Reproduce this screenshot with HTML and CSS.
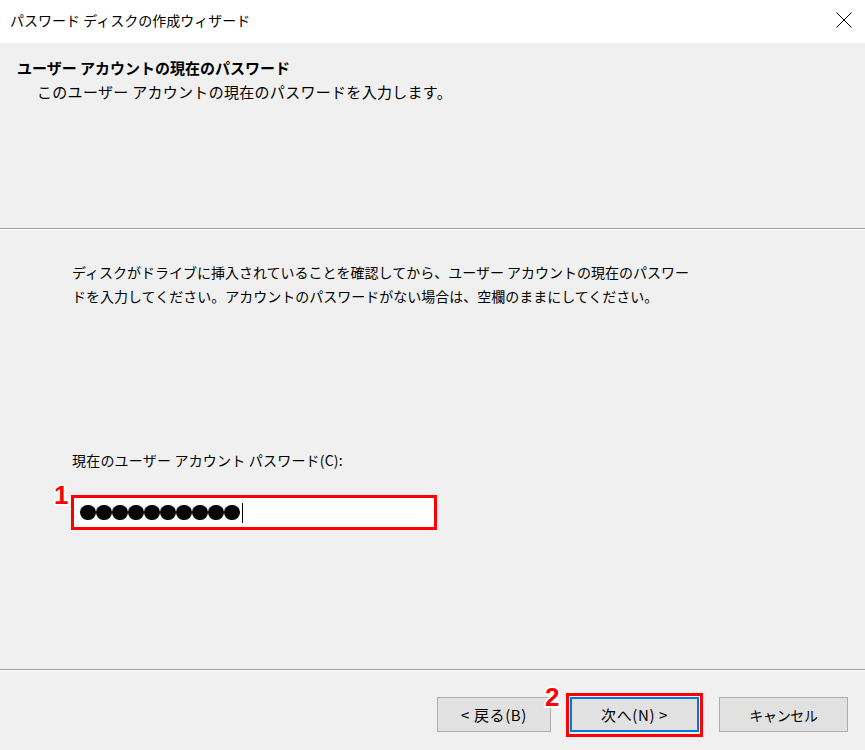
FILE: index.html
```html
<!DOCTYPE html>
<html lang="ja">
<head>
<meta charset="utf-8">
<title>パスワード ディスクの作成ウィザード</title>
<link rel="stylesheet" href="styles.css">
</head>
<body>
<div class="window">
  <div class="titlebar">
    <span class="title">パスワード ディスクの作成ウィザード</span>
    <span class="close">
      <svg width="16" height="16" viewBox="0 0 16 16"><path d="M0.5 0.5 L15.5 15.5 M15.5 0.5 L0.5 15.5" stroke="#000" stroke-width="1" fill="none"/></svg>
    </span>
  </div>
  <div class="header">
    <div class="heading">ユーザー アカウントの現在のパスワード</div>
    <div class="subheading">このユーザー アカウントの現在のパスワードを入力します。</div>
  </div>
  <div class="sep"></div>
  <div class="content">
    <p class="desc">ディスクがドライブに挿入されていることを確認してから、ユーザー アカウントの現在のパスワー<br>ドを入力してください。アカウントのパスワードがない場合は、空欄のままにしてください。</p>
    <div class="label">現在のユーザー アカウント パスワード(C):</div>
    <div class="field-wrap">
      <span class="marker marker-1">1</span>
      <div class="field">
        <span class="dot"></span><span class="dot"></span><span class="dot"></span><span class="dot"></span><span class="dot"></span><span class="dot"></span><span class="dot"></span><span class="dot"></span><span class="dot"></span><span class="dot"></span><span class="caret"></span>
      </div>
    </div>
  </div>
  <div class="sep"></div>
  <div class="footer">
    <button class="btn btn-back">&lt; 戻る(B)</button>
    <div class="highlight">
      <span class="marker marker-2">2</span>
      <button class="btn btn-next">次へ(N) &gt;</button>
    </div>
    <button class="btn btn-cancel">キャンセル</button>
  </div>
</div>
</body>
</html>
```
FILE: styles.css
```css
html, body {
  margin: 0;
  padding: 0;
  background: #f0f0f0;
}
.window {
  width: 865px;
  height: 750px;
  overflow: hidden;
  font-family: "Noto Sans CJK JP", "Noto Sans", sans-serif;
  font-size: 14px;
  color: #000;
  background: #f0f0f0;
}
.titlebar {
  height: 43px;
  background: #fff;
  display: flex;
  align-items: flex-start;
  justify-content: space-between;
}
.title {
  padding-left: 10px;
  line-height: 40px;
  font-size: 14px;
  letter-spacing: 0;
}
.close {
  margin-top: 12px;
  margin-right: 13px;
  width: 16px;
  height: 16px;
}
.close svg { display: block; }
.header {
  height: 185px;
  box-sizing: border-box;
  padding-top: 13px;
  padding-left: 17px;
}
.heading {
  font-weight: bold;
  font-size: 15px;
  line-height: 24px;
  letter-spacing: 0;
}
.subheading {
  font-size: 15px;
  line-height: 24px;
  padding-left: 20px;
  letter-spacing: 0.3px;
}
.sep {
  height: 1px;
  background: #a0a0a0;
  border-bottom: 1px solid #fff;
}
.content {
  height: 439px;
  box-sizing: border-box;
  padding-top: 30px;
  padding-left: 71px;
}
.desc {
  margin: 0 0 0 1px;
  line-height: 24px;
  white-space: nowrap;
  letter-spacing: 0;
}
.label {
  margin-top: 140px;
  margin-left: 1px;
  line-height: 24px;
  letter-spacing: 0.2px;
}
.field-wrap {
  position: relative;
  margin-top: 23px;
  width: 366px;
}
.field {
  height: 35px;
  box-sizing: border-box;
  border: 3px solid #ff0000;
  background: #fff;
  display: flex;
  align-items: center;
  padding-left: 6px;
  gap: 0.5px;
}
.dot {
  width: 15.5px;
  height: 15.5px;
  border-radius: 50%;
  background: #000;
}
.caret {
  width: 1px;
  height: 20px;
  background: #000;
  margin-left: 2px;
}
.marker {
  position: absolute;
  font-family: "Liberation Sans", Arial, sans-serif;
  font-weight: bold;
  font-size: 26px;
  line-height: 26px;
  color: #ff0000;
  text-shadow: 2px 0 0 #fff, -2px 0 0 #fff, 0 2px 0 #fff, 0 -2px 0 #fff, 1.5px 1.5px 0 #fff, -1.5px -1.5px 0 #fff, 1.5px -1.5px 0 #fff, -1.5px 1.5px 0 #fff;
}
.marker-1 {
  left: -17px;
  top: -13px;
}
.footer {
  height: 79px;
  box-sizing: border-box;
  display: flex;
  align-items: flex-start;
  padding-left: 437px;
  padding-top: 22px;
}
.btn {
  font-family: "Noto Sans CJK JP", "Noto Sans", sans-serif;
  font-size: 14px;
  color: #000;
  background: #e1e1e1;
  border: 1px solid #adadad;
  height: 35px;
  padding: 0;
  margin: 0;
  box-sizing: border-box;
  letter-spacing: -0.3px;
}
.btn-back {
  width: 114px;
  margin-top: 4px;
  font-size: 15px;
  letter-spacing: 0.6px;
}
.highlight {
  position: relative;
  margin-left: 15px;
  border: 3px solid #ff0000;
  padding: 1px 1px 2px 1px;
  width: 137px;
  box-sizing: border-box;
}
.btn-next {
  width: 129px;
  display: block;
  border: 2px solid #0078d7;
  background: #e1e1e1;
  font-size: 15px;
  letter-spacing: 0.6px;
}
.marker-2 {
  left: -24px;
  top: -12px;
}
.btn-cancel {
  width: 129px;
  margin-left: 16px;
  margin-top: 4px;
}
```
